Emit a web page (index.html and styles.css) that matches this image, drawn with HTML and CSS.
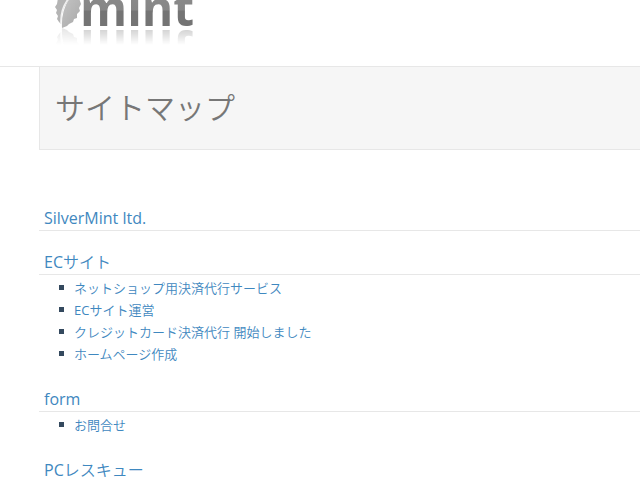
FILE: index.html
```html
<!DOCTYPE html>
<html lang="ja">
<head>
    <meta charset="UTF-8">
    <meta name="viewport" content="width=device-width, initial-scale=1.0">
    <title>サイトマップ | SilverMint</title>
    <link rel="stylesheet" href="styles.css">
</head>
<body>
    <header class="header">
        <a class="logo" href="#">
            <svg width="150" height="28" viewBox="50 0 150 28">
                <defs>
                    <linearGradient id="ink" gradientUnits="userSpaceOnUse" x1="0" y1="-10" x2="0" y2="26">
                        <stop offset="0" stop-color="#8c8c8c"/>
                        <stop offset="0.56" stop-color="#868686"/>
                        <stop offset="0.58" stop-color="#747474"/>
                        <stop offset="1" stop-color="#747474"/>
                    </linearGradient>
                    <linearGradient id="leaf" x1="0" y1="0" x2="1" y2="1">
                        <stop offset="0" stop-color="#c4c4c4"/>
                        <stop offset="1" stop-color="#a8a8a8"/>
                    </linearGradient>
                </defs>
                <path d="M58 -2L57 4L55 7L57 10L56 13L58 16L57 19L59 22L61 24Q60 10 70 -2Z" fill="#b4b4b4"/>
                <path d="M70 -2Q61 10 62 28L67 26L69 24L73 22L74 19L77 18L77 14L80 11L79 8L81 4L79 -2Z" fill="url(#leaf)"/>
                <path d="M69 -2Q60 9 61 24" fill="none" stroke="#f0f0f0" stroke-width="1.5"/>
                <text class="logo-text" x="80" y="26" fill="url(#ink)">mint</text>
            </svg>
        </a>
    </header>

    <main class="container">
        <div class="page-title">
            <h1>サイトマップ</h1>
        </div>

        <nav class="sitemap">
            <section>
                <h2><a href="#">SilverMint ltd.</a></h2>
            </section>
            <section>
                <h2><a href="#">ECサイト</a></h2>
                <ul>
                    <li><a href="#">ネットショップ用決済代行サービス</a></li>
                    <li><a href="#">ECサイト運営</a></li>
                    <li><a href="#">クレジットカード決済代行 開始しました</a></li>
                    <li><a href="#">ホームページ作成</a></li>
                </ul>
            </section>
            <section>
                <h2><a href="#">form</a></h2>
                <ul>
                    <li><a href="#">お問合せ</a></li>
                </ul>
            </section>
            <section>
                <h2><a href="#">PCレスキュー</a></h2>
            </section>
        </nav>
    </main>
</body>
</html>
```
FILE: styles.css
```css
body {
    margin: 0;
    background: #fff;
    color: #34495e;
    font-family: "Open Sans", "Noto Sans CJK JP DemiLight", "Noto Sans CJK JP", sans-serif;
    font-size: 13px;
    line-height: 22px;
}
a {
    color: #3f88c0;
    text-decoration: none;
}
a:hover {
    text-decoration: underline;
}
.header {
    padding: 0 50px 38px;
    border-bottom: 1px solid #e7e7e7;
}
.logo, .logo svg {
    display: block;
}
.logo {
    width: 150px;
    -webkit-box-reflect: below 0 linear-gradient(transparent 40%, rgba(0, 0, 0, 0.35));
}
.logo-text {
    font-family: "Open Sans", sans-serif;
    font-size: 48px;
    font-weight: 700;
}
.container {
    margin-left: 39px;
}
.page-title {
    padding: 20px 15px;
    background: #f6f6f6;
    border: 1px solid #e7e7e7;
    border-width: 0 0 1px 1px;
}
.page-title h1 {
    margin: 0;
    color: #777;
    font-size: 30px;
    font-weight: 400;
    line-height: 42px;
}
.sitemap {
    padding-top: 57px;
}
.sitemap section {
    margin-bottom: 20px;
}
.sitemap h2 {
    margin: 0;
    padding-left: 5px;
    border-bottom: 1px solid #e7e7e7;
    font-size: 16px;
    font-weight: 400;
    line-height: 23px;
}
.sitemap ul {
    margin: 0;
    padding: 2px 0 3px 35px;
    list-style: none;
}
.sitemap li {
    position: relative;
}
.sitemap li::before {
    content: "";
    position: absolute;
    top: 8px;
    left: -15px;
    width: 5px;
    height: 5px;
    background: #34495e;
}
```
